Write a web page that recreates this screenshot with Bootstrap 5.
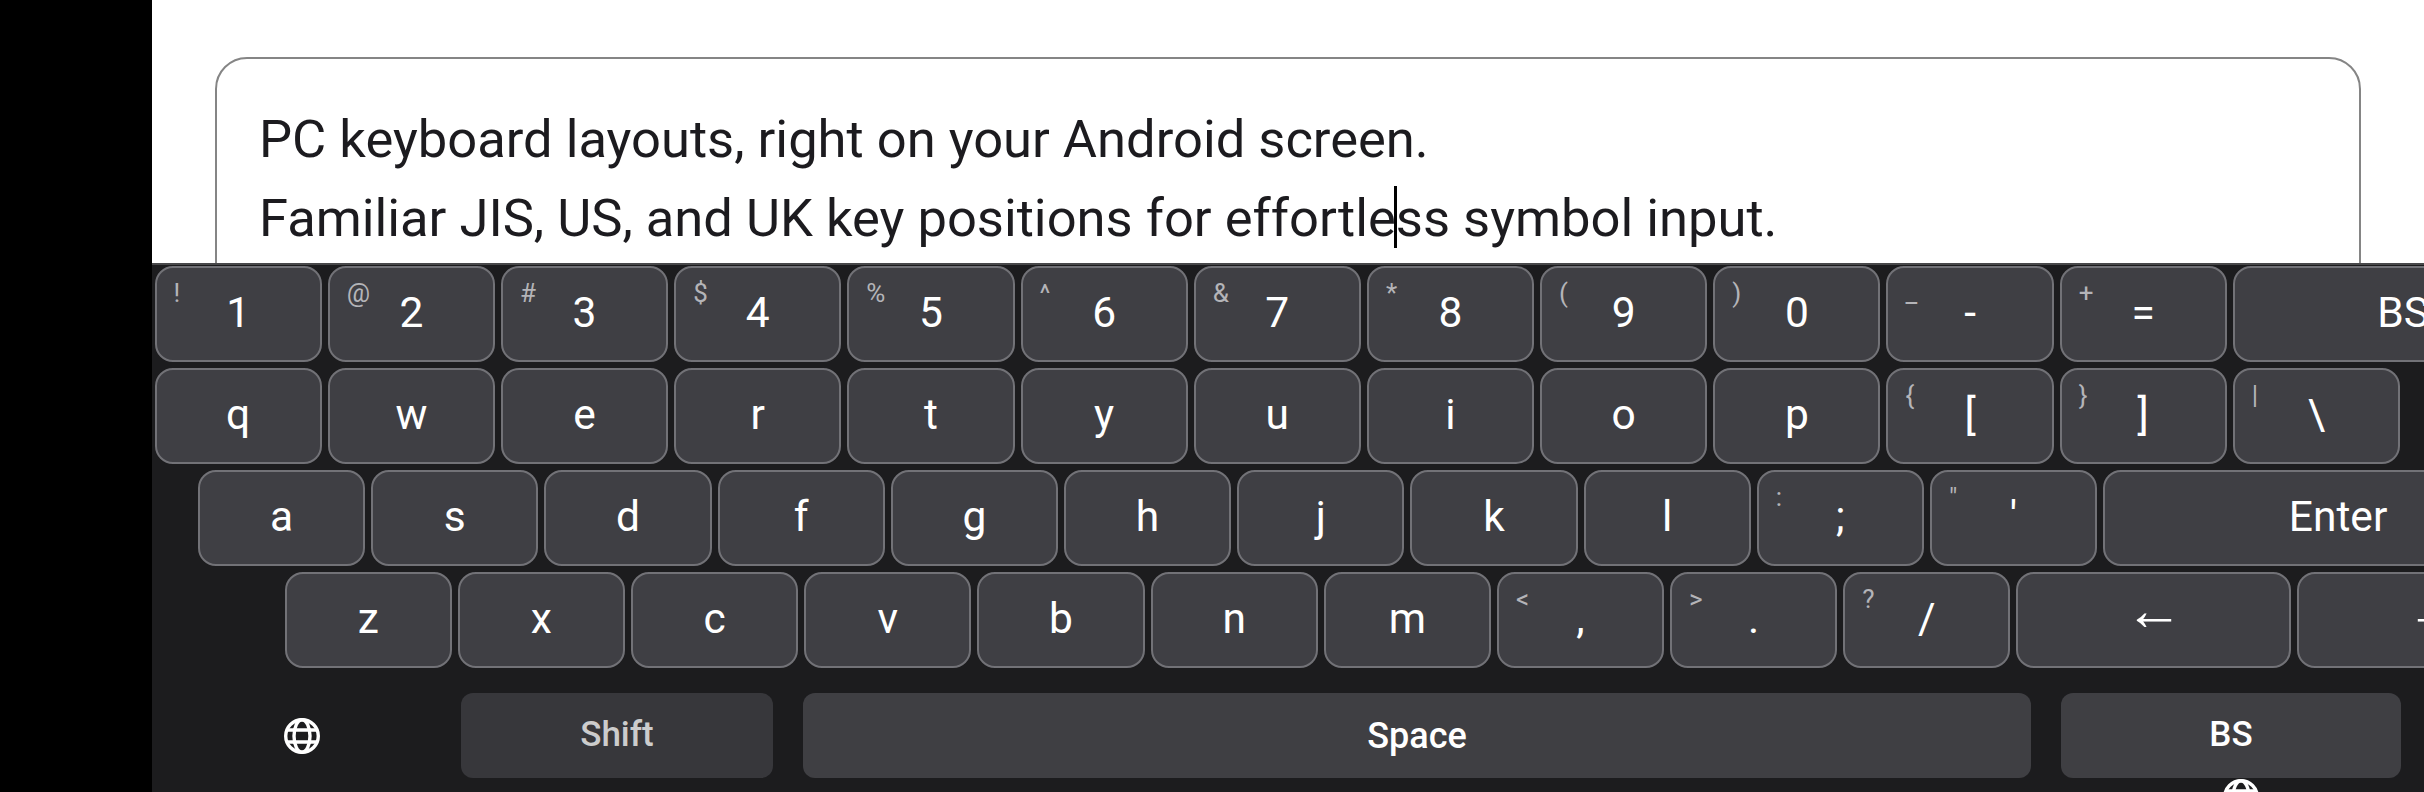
<!DOCTYPE html>
<html lang="en"><head><meta charset="utf-8">
<link rel="stylesheet" href="https://cdn.jsdelivr.net/npm/bootstrap@5.3.0/dist/css/bootstrap.min.css">
<style>
html,body{height:792px;overflow:hidden;background:#000;font-family:Roboto,"Liberation Sans",sans-serif}
.stage{margin-left:152px;width:2272px;height:792px;overflow:hidden;background:#fff}
.doc-area{height:263px;overflow:hidden;padding:57px 63px 0 63px}
.doc-box{border:2px solid #858585;border-radius:32px;height:400px;padding:41px 42px;font-size:52.5px;line-height:79px;color:#1c1b1f;white-space:nowrap}
.caret{display:inline-block;width:3px;height:62px;background:#000;vertical-align:-12px;margin:0 -1.5px}
.kbd-pane{height:529px;background:#1c1c1e;border-top:2px solid #48484a;padding-top:1px;overflow:hidden}
.key-row{gap:6px;height:96px;margin-bottom:6px;padding-left:2.6px;white-space:nowrap}
.ind-a{padding-left:46px}.ind-b{padding-left:132.6px}
.pc-key{position:relative;flex:0 0 167.2px;height:96px;background:#3f3f44;border:2px solid #727277;border-radius:18px;color:#fff;font-size:42.5px;padding-bottom:2px;display:flex;align-items:center;justify-content:center}
.w2{flex-basis:340.4px}.w275{flex-basis:470px}.w16{flex-basis:275px}
.arrow-lbl{font-family:"Liberation Sans",sans-serif;font-size:58px;line-height:1;margin-bottom:18px}
.alt{position:absolute;left:17px;top:12px;font-size:26px;line-height:1;color:#b4b4b8}
.bottom-row{height:85px;margin-top:25px;padding-left:132px}
.act-key{height:85px;border-radius:12px;background:#3f3f43;color:#fff;font-size:35px;font-weight:500;display:flex;align-items:center;justify-content:center}
.globe-slot{margin-right:141px;align-self:center;line-height:0}
.k-shift{width:312px;background:#37373b;color:#ccc;margin-right:30px}
.k-space{width:1228px;margin-right:30px;font-size:36px}
.k-bs{width:340px}
.globe-b{padding:1px 0 0 2071px;line-height:0}
</style></head><body>
<div class="stage">
<div class="doc-area"><div class="doc-box">PC keyboard layouts, right on your Android screen.<br>Familiar JIS, US, and UK key positions for effortle<span class="caret"></span>ss symbol input.</div></div>
<div class="kbd-pane">
<div class="d-flex key-row">
<div class="pc-key"><span class="alt">!</span>1</div><div class="pc-key"><span class="alt">@</span>2</div><div class="pc-key"><span class="alt">#</span>3</div><div class="pc-key"><span class="alt">$</span>4</div><div class="pc-key"><span class="alt">%</span>5</div><div class="pc-key"><span class="alt">^</span>6</div><div class="pc-key"><span class="alt">&amp;</span>7</div><div class="pc-key"><span class="alt">*</span>8</div><div class="pc-key"><span class="alt">(</span>9</div><div class="pc-key"><span class="alt">)</span>0</div><div class="pc-key"><span class="alt">_</span>-</div><div class="pc-key"><span class="alt">+</span>=</div><div class="pc-key w2">BS</div>
</div>
<div class="d-flex key-row">
<div class="pc-key">q</div><div class="pc-key">w</div><div class="pc-key">e</div><div class="pc-key">r</div><div class="pc-key">t</div><div class="pc-key">y</div><div class="pc-key">u</div><div class="pc-key">i</div><div class="pc-key">o</div><div class="pc-key">p</div><div class="pc-key"><span class="alt">{</span>[</div><div class="pc-key"><span class="alt">}</span>]</div><div class="pc-key"><span class="alt">|</span>\</div>
</div>
<div class="d-flex key-row ind-a">
<div class="pc-key">a</div><div class="pc-key">s</div><div class="pc-key">d</div><div class="pc-key">f</div><div class="pc-key">g</div><div class="pc-key">h</div><div class="pc-key">j</div><div class="pc-key">k</div><div class="pc-key">l</div><div class="pc-key"><span class="alt">:</span>;</div><div class="pc-key"><span class="alt">"</span>'</div><div class="pc-key w275">Enter</div>
</div>
<div class="d-flex key-row ind-b">
<div class="pc-key">z</div><div class="pc-key">x</div><div class="pc-key">c</div><div class="pc-key">v</div><div class="pc-key">b</div><div class="pc-key">n</div><div class="pc-key">m</div><div class="pc-key"><span class="alt">&lt;</span>,</div><div class="pc-key"><span class="alt">&gt;</span>.</div><div class="pc-key"><span class="alt">?</span>/</div><div class="pc-key w16"><span class="arrow-lbl">←</span></div><div class="pc-key w16"><span class="arrow-lbl">→</span></div>
</div>
<div class="d-flex bottom-row">
<div class="globe-slot"><svg width="36" height="36" viewBox="0 0 36 36" fill="none" stroke="#fff" stroke-width="3.4"><circle cx="18" cy="18" r="16.3"/><ellipse cx="18" cy="18" rx="8" ry="16.3"/><path d="M3 12h30M3 24h30"/></svg></div>
<div class="act-key k-shift">Shift</div><div class="act-key k-space">Space</div><div class="act-key k-bs">BS</div>
</div>
<div class="globe-b"><svg width="36" height="36" viewBox="0 0 36 36" fill="none" stroke="#fff" stroke-width="3.4"><circle cx="18" cy="18" r="16.3"/><ellipse cx="18" cy="18" rx="8" ry="16.3"/><path d="M3 12h30M3 24h30"/></svg></div>
</div>
</div>
<script src="https://cdn.jsdelivr.net/npm/bootstrap@5.3.0/dist/js/bootstrap.bundle.min.js"></script>
</body></html>
